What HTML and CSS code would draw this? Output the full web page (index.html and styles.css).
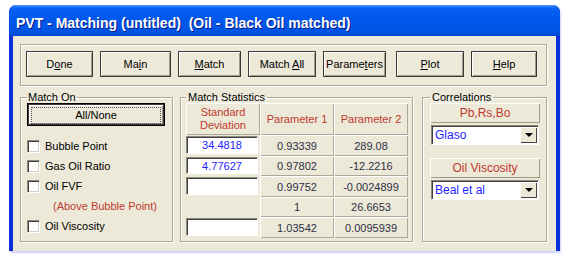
FILE: index.html
```html
<!DOCTYPE html>
<html lang="en">
<head>
    <meta charset="UTF-8">
    <title>PVT - Matching</title>
    <link rel="stylesheet" href="styles.css">
</head>
<body>

<div class="window">
    <div class="titlebar">PVT - Matching (untitled)&nbsp; (Oil - Black Oil matched)</div>

    <div class="client">
        <div class="toolbar">
            <button class="btn b-done">D<u>o</u>ne</button>
            <button class="btn b-main">Ma<u>i</u>n</button>
            <button class="btn b-match"><u>M</u>atch</button>
            <button class="btn b-matchall">Match <u>A</u>ll</button>
            <button class="btn b-params">Parame<u>t</u>ers</button>
            <button class="btn b-plot"><u>P</u>lot</button>
            <button class="btn b-help"><u>H</u>elp</button>
        </div>

        <div class="groups">
            <fieldset class="group match-on">
                <legend>Match On</legend>
                <button class="btn btn-default"><span class="focus">All/None</span></button>
                <div class="checks">
                    <label class="check"><span class="box"></span>Bubble Point</label>
                    <label class="check"><span class="box"></span>Gas Oil Ratio</label>
                    <label class="check"><span class="box"></span>Oil FVF</label>
                    <div class="note">(Above Bubble Point)</div>
                    <label class="check"><span class="box"></span>Oil Viscosity</label>
                </div>
            </fieldset>

            <fieldset class="group stats">
                <legend>Match Statistics</legend>
                <div class="grid">
                    <div class="cell head">Standard<br>Deviation</div>
                    <div class="cell head">Parameter 1</div>
                    <div class="cell head">Parameter 2</div>

                    <div class="sd"><span class="field">34.4818</span></div>
                    <div class="cell">0.93339</div>
                    <div class="cell">289.08</div>

                    <div class="sd"><span class="field">4.77627</span></div>
                    <div class="cell">0.97802</div>
                    <div class="cell">-12.2216</div>

                    <div class="sd"><span class="field"></span></div>
                    <div class="cell">0.99752</div>
                    <div class="cell">-0.0024899</div>

                    <div class="sd"></div>
                    <div class="cell">1</div>
                    <div class="cell">26.6653</div>

                    <div class="sd"><span class="field"></span></div>
                    <div class="cell">1.03542</div>
                    <div class="cell">0.0095939</div>
                </div>
            </fieldset>

            <fieldset class="group corr">
                <legend>Correlations</legend>
                <div class="corr-head">Pb,Rs,Bo</div>
                <div class="combo"><span class="combo-text">Glaso</span><span class="combo-arrow"></span></div>
                <div class="corr-head second">Oil Viscosity</div>
                <div class="combo"><span class="combo-text">Beal et al</span><span class="combo-arrow"></span></div>
            </fieldset>
        </div>
    </div>
</div>

</body>
</html>
```

FILE: styles.css
```css
body {
    margin: 0;
    background-color: #ffffff;
    font-family: "Liberation Sans", Arial, sans-serif;
    font-size: 11px;
    color: #000;
}
.window {
    margin: 5px 0 0 9px;
    width: 551px;
    background-color: #0831d9;
    border-radius: 7px 7px 0 0;
    box-shadow: 1px 2px 2px rgba(120, 120, 230, 0.35);
}
.titlebar {
    height: 26px;
    padding: 5px 0 0 7px;
    line-height: 26px;
    font-size: 14px;
    font-weight: bold;
    color: #ffffff;
    white-space: pre;
    text-shadow: 1px 1px 0 #0a1a8a;
    border-radius: 7px 7px 0 0;
    background: linear-gradient(#4e9bff 0, #0a62f2 3px, #0058ee 40%, #0054e3 85%, #0047cf 100%);
}
.client {
    margin: 0 4px 4px 4px;
    height: 215px;
    background-color: #ece9d8;
    padding: 8px 9px 0 7px;
    box-sizing: border-box;
}
.toolbar {
    height: 42px;
    box-sizing: border-box;
    border: 1px solid #aca899;
    box-shadow: inset 1px 1px 0 #fff, 1px 1px 0 #fff;
    padding: 6px 0 0 5px;
    display: flex;
    gap: 7px;
}
.btn {
    font-family: "Liberation Sans", Arial, sans-serif;
    font-size: 11px;
    color: #000;
    height: 26px;
    padding: 0;
    background-color: #ece9d8;
    border: 1px solid #3a3a3a;
    box-shadow: inset 1px 1px 0 #fff, inset -1px -1px 0 #9d9a8a;
}
.b-done { width: 67px; }
.b-main { width: 71px; }
.b-match { width: 63px; }
.b-matchall { width: 68px; }
.b-params { width: 63px; }
.b-plot { width: 68px; margin-left: 3px; }
.b-help { width: 66px; }

.groups {
    display: flex;
    margin-top: 5px;
}
.group {
    margin: 0;
    min-width: 0;
    height: 151px;
    box-sizing: border-box;
    border: 1px solid #aca899;
    box-shadow: inset 1px 1px 0 #fff, 1px 1px 0 #fff;
}
.group legend {
    padding: 0 1px;
    line-height: 12px;
    font-size: 11px;
}
.match-on {
    width: 153px;
    padding: 0 6px;
}
.stats {
    width: 233px;
    margin-left: 7px;
    padding: 0 4px 0 5px;
}
.stats legend, .corr legend {
    padding: 0 2px;
}
.corr {
    width: 125px;
    margin-left: 9px;
    padding: 0 7px;
}

.btn-default {
    width: 138px;
    height: 23px;
    border: 1px solid #000;
    box-shadow: inset 0 0 0 1px #3a3a3a, inset 2px 2px 0 #fff, inset -2px -2px 0 #9d9a8a;
    padding: 3px;
}
.focus {
    display: block;
    height: 15px;
    line-height: 15px;
    border: 1px dotted #555;
}
.checks {
    margin-top: 10px;
}
.check, .note {
    display: flex;
    align-items: center;
    height: 20px;
}
.box {
    width: 13px;
    height: 13px;
    box-sizing: border-box;
    margin-right: 5px;
    background-color: #fff;
    border-top: 1px solid #8d8a7c;
    border-left: 1px solid #8d8a7c;
    border-right: 1px solid #fff;
    border-bottom: 1px solid #fff;
    box-shadow: inset 1px 1px 0 #404040, inset -1px -1px 0 #d4d0c8;
}
.note {
    padding-left: 26px;
    color: #c0392f;
}

.grid {
    display: grid;
    grid-template-columns: 74px 74px 74px;
    grid-template-rows: 32px 21px 20px 21px 20px 21px;
}
.cell {
    display: flex;
    align-items: center;
    justify-content: center;
    text-align: center;
    color: #2f2f45;
    box-shadow: inset 1px 1px 0 #fff, inset -1px -1px 0 #aca899;
}
.cell.head {
    color: #c0392f;
    line-height: 13px;
}
.sd {
    padding: 1px 2px 2px 0;
}
.field {
    display: block;
    height: 100%;
    box-sizing: border-box;
    background-color: #fff;
    color: #2424ff;
    text-align: center;
    line-height: 16px;
    border-top: 1px solid #8d8a7c;
    border-left: 1px solid #8d8a7c;
    border-right: 1px solid #fff;
    border-bottom: 1px solid #fff;
    box-shadow: inset 1px 1px 0 #404040;
}

.corr-head {
    width: 110px;
    height: 20px;
    box-sizing: border-box;
    line-height: 20px;
    text-align: center;
    color: #c0392f;
    font-size: 12px;
    box-shadow: inset 1px 1px 0 #fff, inset -1px -1px 0 #9d9a8a;
}
.corr-head.second {
    margin-top: 13px;
}
.combo {
    margin: 2px 0 0 1px;
    width: 108px;
    height: 20px;
    box-sizing: border-box;
    display: flex;
    background-color: #fff;
    border-top: 1px solid #8d8a7c;
    border-left: 1px solid #8d8a7c;
    border-right: 1px solid #fff;
    border-bottom: 1px solid #fff;
    box-shadow: inset 1px 1px 0 #404040;
}
.combo-text {
    flex: 1;
    padding: 0 0 0 3px;
    line-height: 18px;
    color: #2424ff;
    font-size: 12px;
}
.combo-arrow {
    width: 17px;
    margin: 1px 1px 1px 0;
    background-color: #ece9d8;
    box-shadow: inset 1px 1px 0 #fff, inset -1px -1px 0 #404040;
    display: flex;
    align-items: center;
    justify-content: center;
}
.combo-arrow::after {
    content: "";
    border-left: 4px solid transparent;
    border-right: 4px solid transparent;
    border-top: 4px solid #000;
}
```
